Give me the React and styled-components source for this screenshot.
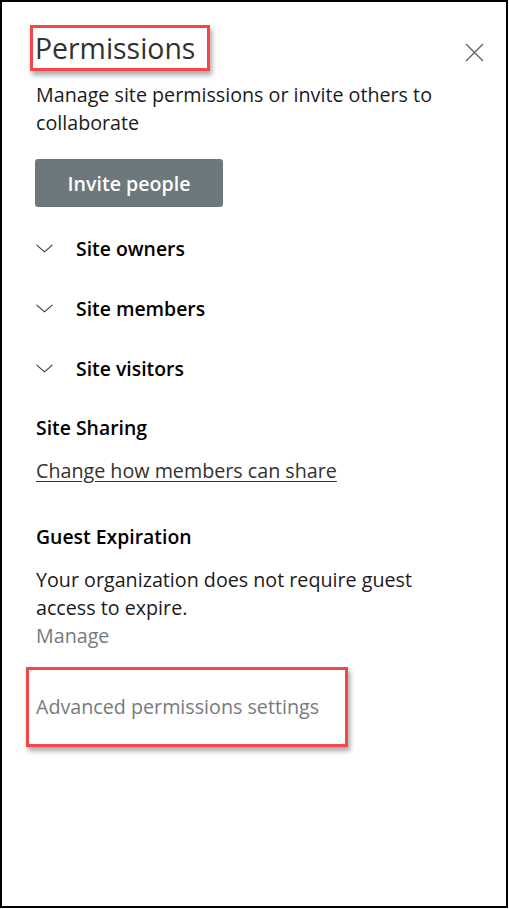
import React from "react";
import styled, { createGlobalStyle } from "styled-components";

const GlobalStyle = createGlobalStyle`
  html, body {
    margin: 0;
    padding: 0;
    background: #ffffff;
  }
  body {
    font-family: "Open Sans", "Noto Sans", "Liberation Sans", sans-serif;
  }
`;

const Panel = styled.div`
  box-sizing: border-box;
  width: 508px;
  height: 908px;
  border: 2px solid #000000;
  background: #ffffff;
  padding: 23px 22px 0 34px;
  display: flex;
  flex-direction: column;
  align-items: flex-start;
`;

const HeaderRow = styled.div`
  align-self: stretch;
  display: flex;
  justify-content: space-between;
  align-items: flex-start;
`;

// red annotation frame drawn around a highlighted element
const Callout = styled.div`
  box-sizing: border-box;
  border: 3px solid #f2474c;
  box-shadow: 2px 4px 5px rgba(0, 0, 0, 0.35);
  margin: ${(p) => p.$mt || 0}px 0 0 ${(p) => p.$shift}px;
  padding: 0 ${(p) => p.$padX}px;
  width: ${(p) => p.$width}px;
  height: ${(p) => p.$height}px;
  display: flex;
  align-items: center;
`;

const Title = styled.h1`
  margin: 0;
  font-size: 28.4px;
  line-height: 40px;
  font-weight: 400;
  color: #323130;
`;

const CloseButton = styled.button`
  border: none;
  background: transparent;
  padding: 0;
  margin-top: 17px;
  width: 20px;
  height: 20px;
  display: flex;
  align-items: center;
  justify-content: center;
  cursor: pointer;
`;

const Text = styled.p`
  margin: ${(p) => p.$mt || 0}px 0 0;
  font-size: 19.7px;
  line-height: 28px;
  color: #1b1a19;
  max-width: 420px;
`;

const PrimaryButton = styled.button`
  margin-top: 22px;
  margin-left: -1px;
  width: 188px;
  height: 48px;
  border: none;
  border-radius: 3px;
  background: #6c787b;
  color: #ffffff;
  font-family: inherit;
  font-size: 19.6px;
  font-weight: 600;
  cursor: pointer;
`;

const GroupList = styled.div`
  margin-top: 11px;
  display: flex;
  flex-direction: column;
`;

const GroupRow = styled.div`
  height: 60px;
  display: flex;
  align-items: center;
  gap: 23px;
  font-size: 19.4px;
  font-weight: 600;
  color: #000000;
  cursor: pointer;
`;

const Heading = styled.h2`
  margin: ${(p) => p.$mt}px 0 0;
  font-size: 19.4px;
  line-height: 28px;
  font-weight: 600;
  color: #000000;
`;

const Link = styled.a`
  margin-top: ${(p) => p.$mt || 0}px;
  font-size: 19.7px;
  line-height: 28px;
  color: ${(p) => (p.$muted ? "#767a7d" : "#323130")};
  text-decoration: ${(p) => (p.$underline ? "underline" : "none")};
  text-underline-offset: 3px;
  cursor: pointer;
`;

const Chevron = () => (
  <svg width="17" height="9" viewBox="0 0 17 9">
    <polyline
      points="0.5,0.8 8.5,7.8 16.5,0.8"
      fill="none"
      stroke="#323130"
      strokeWidth="1.1"
    />
  </svg>
);

const CloseIcon = () => (
  <svg width="19" height="19" viewBox="0 0 19 19">
    <path
      d="M1 1 L18 18 M18 1 L1 18"
      stroke="#605e5c"
      strokeWidth="1.3"
      fill="none"
    />
  </svg>
);

const groups = ["Site owners", "Site members", "Site visitors"];

export default function App() {
  return (
    <>
      <GlobalStyle />
      <Panel>
        <HeaderRow>
          <Callout $shift={-6} $padX={2} $width={180} $height={46}>
            <Title>Permissions</Title>
          </Callout>
          <CloseButton aria-label="Close">
            <CloseIcon />
          </CloseButton>
        </HeaderRow>
        <Text $mt={10}>
          Manage site permissions or invite others to collaborate
        </Text>
        <PrimaryButton>Invite people</PrimaryButton>
        <GroupList>
          {groups.map((g) => (
            <GroupRow key={g}>
              <Chevron />
              {g}
            </GroupRow>
          ))}
        </GroupList>
        <Heading $mt={16}>Site Sharing</Heading>
        <Link $underline $mt={15}>
          Change how members can share
        </Link>
        <Heading $mt={38}>Guest Expiration</Heading>
        <Text $mt={15}>
          Your organization does not require guest access to expire.
        </Text>
        <Link $muted>Manage</Link>
        <Callout $mt={17} $shift={-10} $padX={7} $width={322} $height={80}>
          <Link $muted>Advanced permissions settings</Link>
        </Callout>
      </Panel>
    </>
  );
}
